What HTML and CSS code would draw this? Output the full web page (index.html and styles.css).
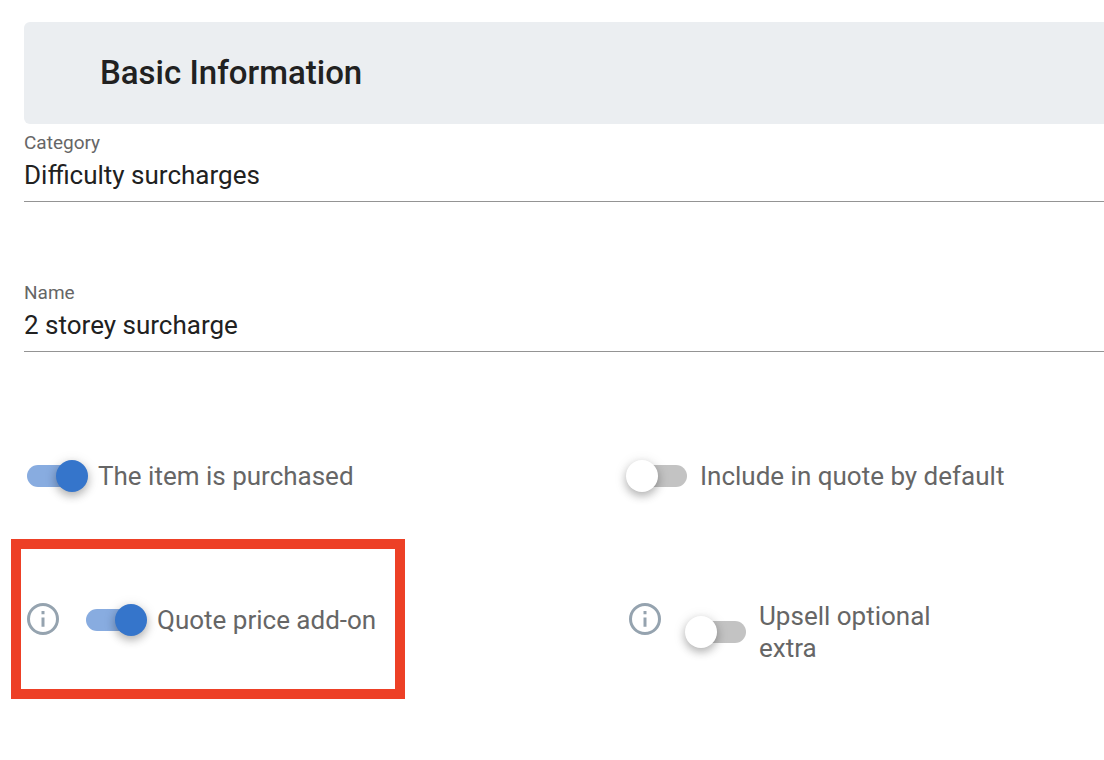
FILE: index.html
```html
<!DOCTYPE html>
<html lang="en">
<head>
<meta charset="utf-8">
<meta name="viewport" content="width=device-width, initial-scale=1">
<title>Basic Information</title>
<link rel="stylesheet" href="styles.css">
</head>
<body>
<main class="page">
  <header class="section-header"><h1 class="section-title">Basic Information</h1></header>
  <form class="form">
    <div class="field">
      <label class="field-label" for="category">Category</label>
      <input class="field-input" id="category" type="text" value="Difficulty surcharges">
    </div>
    <div class="field">
      <label class="field-label" for="name">Name</label>
      <input class="field-input" id="name" type="text" value="2 storey surcharge">
    </div>
    <div class="options">
      <div class="option">
        <label class="toggle"><input class="switch" type="checkbox" role="switch" checked><span class="toggle-text">The item is purchased</span></label>
      </div>
      <div class="option">
        <label class="toggle"><input class="switch" type="checkbox" role="switch"><span class="toggle-text">Include in quote by default</span></label>
      </div>
      <div class="option option-info option-highlight">
        <svg class="info" viewBox="0 0 32 32" aria-hidden="true"><circle cx="16" cy="16" r="14.5"/><path d="M16 14.4v9.4M16 8v3.2"/></svg>
        <label class="toggle"><input class="switch" type="checkbox" role="switch" checked><span class="toggle-text">Quote price add-on</span></label>
      </div>
      <div class="option option-info">
        <svg class="info" viewBox="0 0 32 32" aria-hidden="true"><circle cx="16" cy="16" r="14.5"/><path d="M16 14.4v9.4M16 8v3.2"/></svg>
        <label class="toggle"><input class="switch" type="checkbox" role="switch"><span class="toggle-text toggle-text-narrow">Upsell optional extra</span></label>
      </div>
    </div>
  </form>
</main>
</body>
</html>
```

FILE: styles.css
```css
*,
*::before,
*::after { box-sizing: border-box; }

body {
  margin: 0;
  background: #fff;
  color: #212121;
  font-family: Roboto, "Liberation Sans", sans-serif;
}

.page { padding: 22px 0 0 24px; }

.section-header {
  padding: 31px 76px;
  border-radius: 6px 0 0 6px;
  background: #ebeef1;
}

.section-title {
  margin: 0;
  font-size: 33px;
  line-height: 40px;
  font-weight: 500;
}

.field {
  display: flex;
  flex-direction: column;
  padding-top: 8px;
  border-bottom: 1px solid #949494;
}

.field + .field { margin-top: 72px; }

.field-label {
  color: #666;
  font-size: 19px;
  line-height: 22px;
}

.field-input {
  width: 100%;
  height: 47px;
  padding: 0 0 6px;
  border: 0;
  outline: 0;
  background: transparent;
  color: #212121;
  font: 26px/32px Roboto, "Liberation Sans", sans-serif;
}

.options {
  display: grid;
  grid-template-columns: 301fr 239fr;
  row-gap: 43px;
  padding-top: 104px;
}

.option {
  display: flex;
  align-items: flex-start;
}

.option-info {
  gap: 24px;
  padding: 61px 0 0 3px;
}

.option-highlight {
  position: relative;
  justify-self: start;
  padding-bottom: 59px;
}

.option-highlight::before {
  content: "";
  position: absolute;
  inset: 0 -29px 0 -13px;
  border: 10px solid #ed4026;
  pointer-events: none;
}

.info {
  flex: none;
  width: 32px;
  height: 32px;
  margin-top: 3px;
  fill: none;
  stroke: #95a3af;
  stroke-width: 3;
}

.toggle {
  display: flex;
  align-items: center;
  gap: 10px;
  min-height: 40px;
}

.toggle-text {
  color: #666;
  font-size: 26px;
  line-height: 32px;
}

.toggle-text-narrow { max-width: 190px; }

.switch {
  appearance: none;
  display: grid;
  align-items: center;
  flex: none;
  width: 64px;
  height: 32px;
  margin: 0;
}

.switch::before,
.switch::after {
  content: "";
  grid-area: 1 / 1;
}

.switch::before {
  height: 22px;
  margin: 0 3px;
  border-radius: 11px;
  background: #c3c3c3;
}

.switch::after {
  width: 32px;
  height: 32px;
  border-radius: 50%;
  background: #fff;
  box-shadow: 0 4px 8px rgba(0, 0, 0, 0.24), 0 2px 14px rgba(0, 0, 0, 0.12);
}

.switch:checked::before { background: #88ace0; }

.switch:checked::after {
  justify-self: end;
  background: #3575cb;
}
```
